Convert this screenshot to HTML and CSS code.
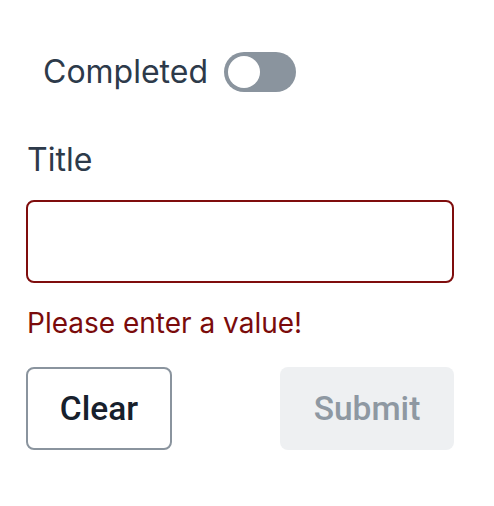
FILE: index.html
```html
<!DOCTYPE html>
<html lang="en">
<head>
<meta charset="UTF-8">
<meta name="viewport" content="width=device-width, initial-scale=1.0">
<title>Task Form</title>
<link rel="stylesheet" href="styles.css">
</head>
<body>

<form class="task-form" onsubmit="return false">
    <!-- Completed switch -->
    <label class="switch-row">
        <span class="switch-label">Completed</span>
        <span class="switch">
            <span class="switch-knob"></span>
        </span>
    </label>

    <div class="field">
        <label class="field-label" for="title">Title</label>
        <input type="text" id="title" class="field-input">
        <p class="field-error">Please enter a value!</p>
    </div>

    <div class="actions">
        <button type="button" class="btn btn-outline">Clear</button>
        <button type="submit" class="btn btn-disabled" disabled>Submit</button>
    </div>
</form>

</body>
</html>
```

FILE: styles.css
```css
body {
    margin: 0;
    padding: 0;
    background-color: #fff;
    font-family: Inter, "Noto Sans", sans-serif;
}

.task-form {
    width: 428px;
    padding: 52px 0 0 26px;
}

/* Switch row */
.switch-row {
    display: flex;
    align-items: center;
    gap: 16px;
    padding-left: 17px;
}

.switch-label {
    font-size: 32px;
    line-height: 40px;
    color: #2d3a4a;
}

.switch {
    display: flex;
    align-items: center;
    width: 72px;
    height: 40px;
    padding: 4px;
    box-sizing: border-box;
    border-radius: 20px;
    background-color: #8a949e;
}

.switch-knob {
    width: 32px;
    height: 32px;
    border-radius: 50%;
    background-color: #fff;
}

/* Title field */
.field {
    margin-top: 50px;
}

.field-label {
    display: block;
    font-size: 32px;
    line-height: 36px;
    color: #2d3a4a;
    padding-left: 1px;
}

.field-input {
    display: block;
    width: 100%;
    height: 83px;
    margin-top: 22px;
    box-sizing: border-box;
    border: 2px solid #7f0d0d;
    border-radius: 8px;
    outline: none;
    font-size: 28px;
    padding: 0 20px;
}

.field-error {
    margin: 24px 0 0 1px;
    font-size: 28px;
    line-height: 32px;
    color: #7a0b0b;
}

/* Buttons */
.actions {
    display: flex;
    justify-content: space-between;
    margin-top: 28px;
}

.btn {
    height: 83px;
    border-radius: 8px;
    font-family: Roboto, "Liberation Sans", sans-serif;
    font-size: 33.5px;
    font-weight: 500;
}

.btn-outline {
    width: 146px;
    background-color: #fff;
    border: 2px solid #8a949e;
    color: #17202c;
    cursor: pointer;
}

.btn-disabled {
    width: 174px;
    background-color: #eef0f2;
    border: none;
    color: #8e98a2;
}
```
